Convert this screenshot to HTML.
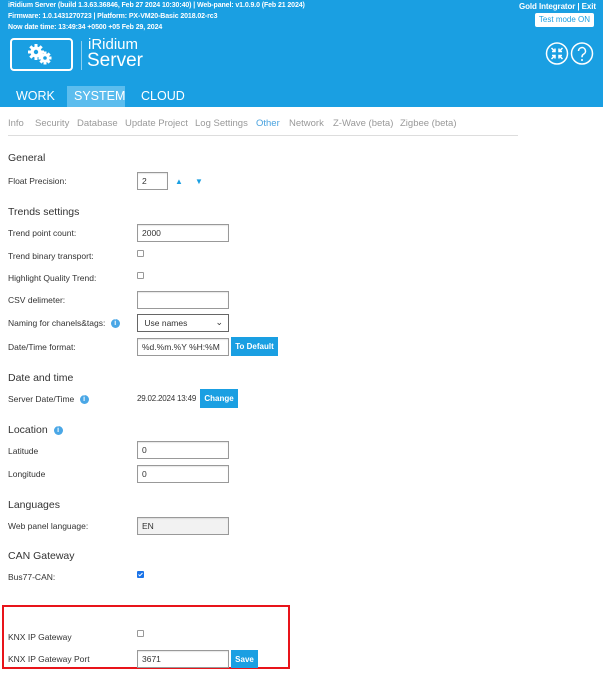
<!DOCTYPE html>
<html><head><meta charset="utf-8"><style>
*{margin:0;padding:0;box-sizing:border-box}
body{width:603px;height:675px;overflow:hidden;background:#fff;font-family:"Liberation Sans",sans-serif;color:#333;position:relative}
.a{position:absolute;white-space:nowrap}
.hdr{position:absolute;left:0;top:0;width:603px;height:107px;background:#1a9fe2}
.t{color:#fff;font-size:7px;font-weight:bold;letter-spacing:-0.1px}
.sub{font-size:9.5px;color:#999;top:118px}
.h{font-size:10.5px;color:#333}
.l{font-size:8.5px;color:#333}
.in{position:absolute;border:1px solid #999;background:#fff;font-size:8.5px;padding:0 0 0 4px;display:flex;align-items:center;box-shadow:inset 0 1px 1px rgba(0,0,0,.1)}
.cb{position:absolute;width:7px;height:7px;border:1px solid #999;border-radius:1px;background:#fff}
.btn{position:absolute;background:#1a9fe2;color:#fff;font-size:8px;font-weight:bold;display:flex;align-items:center;justify-content:center}
.info{display:inline-block;width:9px;height:9px;border-radius:50%;background:#4aa7e6;color:#fff;font-size:7px;text-align:center;line-height:9px;font-weight:bold;vertical-align:middle;margin-left:3px}
</style></head><body>
<div class="hdr"></div>
<div class="a t" style="left:8px;top:2px">iRidium Server (build 1.3.63.36846, Feb 27 2024 10:30:40) | Web-panel: v1.0.9.0 (Feb 21 2024)</div>
<div class="a t" style="left:8px;top:13px">Firmware: 1.0.1431270723 | Platform: PX-VM20-Basic 2018.02-rc3</div>
<div class="a t" style="left:8px;top:24px">Now date time: 13:49:34 +0500 +05 Feb 29, 2024</div>
<div class="a t" style="left:519px;top:2px;font-size:8px">Gold Integrator | Exit</div>
<div class="a" style="left:535px;top:13px;width:59px;height:14px;background:#fff;border-radius:2px;color:#1a9fe2;font-size:8px;text-align:center;line-height:14px">Test mode ON</div>
<div class="a" style="left:10px;top:38px;width:63px;height:33px;border:2px solid #fff;border-radius:4px"></div>
<svg class="a" style="left:26px;top:43px" width="30" height="24" viewBox="0 0 30 24"><g fill="#fff"><circle cx="10" cy="9" r="5.5"/><circle cx="19" cy="15" r="4.5"/></g><g stroke="#fff" stroke-width="3"><path d="M10 1v16M2 9h16M4.3 3.3l11.4 11.4M4.3 14.7L15.7 3.3"/><path d="M19 8.5v13M12.5 15h13M14.4 10.4l9.2 9.2M14.4 19.6l9.2-9.2"/></g><circle cx="10" cy="9" r="2.2" fill="#1a9fe2"/><circle cx="19" cy="15" r="1.8" fill="#1a9fe2"/></svg>
<div class="a" style="left:81px;top:41px;width:1px;height:29px;background:#8ccff0"></div>
<div class="a" style="left:88px;top:36px;color:#fff;font-size:15px">iRidium</div>
<div class="a" style="left:87px;top:50px;color:#fff;font-size:19px">Server</div>
<svg class="a" style="left:545px;top:41px" width="50" height="25" viewBox="0 0 50 25"><g fill="none" stroke="#fff" stroke-width="1.5"><circle cx="12" cy="12.5" r="10.5"/><circle cx="37" cy="12.5" r="10.5"/><path d="M6.5 7l3.5 3.5M10 7.5v3H7M17.5 18L14 14.5M14 17.5v-3h3M14 10.5L17.5 7M14 7.5v3h3M10 14.5L6.5 18M7 14.5h3v3"/><path d="M33.5 10a3.5 3.5 0 1 1 5 3.2c-1.3.6-1.5 1.3-1.5 3"/></g><circle cx="37" cy="19" r="1" fill="#fff"/></svg>
<div class="a" style="left:67px;top:86px;width:58px;height:21px;background:#5cbdee"></div>
<div class="a" style="left:16px;top:89px;color:#fff;font-size:12.5px">WORK</div>
<div class="a" style="left:74px;top:89px;color:#fff;font-size:12.5px">SYSTEM</div>
<div class="a" style="left:141px;top:89px;color:#fff;font-size:12.5px">CLOUD</div>
<div class="a sub" style="left:8px">Info</div>
<div class="a sub" style="left:35px">Security</div>
<div class="a sub" style="left:77px">Database</div>
<div class="a sub" style="left:125px">Update Project</div>
<div class="a sub" style="left:195px">Log Settings</div>
<div class="a sub" style="left:256px;color:#4aa3df">Other</div>
<div class="a sub" style="left:289px">Network</div>
<div class="a sub" style="left:333px">Z-Wave (beta)</div>
<div class="a sub" style="left:400px">Zigbee (beta)</div>
<div class="a" style="left:8px;top:135px;width:510px;height:1px;background:#ddd"></div>

<div class="a h" style="left:8px;top:152px">General</div>
<div class="a l" style="left:8px;top:176px">Float Precision:</div>
<div class="in" style="left:137px;top:172px;width:31px;height:18px">2</div>
<div class="a" style="left:175px;top:177px;color:#1a9fe2;font-size:8px">▲</div>
<div class="a" style="left:195px;top:177px;color:#1a9fe2;font-size:8px">▼</div>

<div class="a h" style="left:8px;top:206px">Trends settings</div>
<div class="a l" style="left:8px;top:228px">Trend point count:</div>
<div class="in" style="left:137px;top:224px;width:92px;height:18px">2000</div>
<div class="a l" style="left:8px;top:251px">Trend binary transport:</div>
<div class="cb" style="left:137px;top:250px"></div>
<div class="a l" style="left:8px;top:273px">Highlight Quality Trend:</div>
<div class="cb" style="left:137px;top:272px"></div>
<div class="a l" style="left:8px;top:295px">CSV delimeter:</div>
<div class="in" style="left:137px;top:291px;width:92px;height:18px"></div>
<div class="a l" style="left:8px;top:318px">Naming for chanels&amp;tags: <span class="info">i</span></div>
<div class="in" style="left:137px;top:314px;width:92px;height:18px;box-shadow:none;border-color:#666">&nbsp;Use names<span style="position:absolute;right:5px;top:2px;font-size:9px">⌄</span></div>
<div class="a l" style="left:8px;top:342px">Date/Time format:</div>
<div class="in" style="left:137px;top:338px;width:92px;height:18px">%d.%m.%Y %H:%M</div>
<div class="btn" style="left:231px;top:337px;width:47px;height:19px">To Default</div>

<div class="a h" style="left:8px;top:372px">Date and time</div>
<div class="a l" style="left:8px;top:394px">Server Date/Time <span class="info">i</span></div>
<div class="a l" style="left:137px;top:394px;font-size:8px;letter-spacing:-0.2px">29.02.2024 13:49</div>
<div class="btn" style="left:200px;top:389px;width:38px;height:19px">Change</div>

<div class="a h" style="left:8px;top:424px">Location <span class="info">i</span></div>
<div class="a l" style="left:8px;top:446px">Latitude</div>
<div class="in" style="left:137px;top:441px;width:92px;height:18px">0</div>
<div class="a l" style="left:8px;top:469px">Longitude</div>
<div class="in" style="left:137px;top:465px;width:92px;height:18px">0</div>

<div class="a h" style="left:8px;top:499px">Languages</div>
<div class="a l" style="left:8px;top:521px">Web panel language:</div>
<div class="in" style="left:137px;top:517px;width:92px;height:18px;background:#f2f2f2">EN</div>

<div class="a h" style="left:8px;top:550px">CAN Gateway</div>
<div class="a l" style="left:8px;top:572px">Bus77-CAN:</div>
<div class="cb" style="left:137px;top:571px;background:#1a73e8;border-color:#1a73e8"><svg width="5" height="5" style="position:absolute;left:0;top:0" viewBox="0 0 5 5"><path d="M.5 2.5l1.3 1.3L4.5 1" stroke="#fff" fill="none" stroke-width="1"/></svg></div>

<div class="a" style="left:2px;top:605px;width:288px;height:64px;border:2px solid #e8141a"></div>
<div class="a l" style="left:8px;top:632px">KNX IP Gateway</div>
<div class="cb" style="left:137px;top:630px"></div>
<div class="a l" style="left:8px;top:654px">KNX IP Gateway Port</div>
<div class="in" style="left:137px;top:650px;width:92px;height:18px">3671</div>
<div class="btn" style="left:231px;top:650px;width:27px;height:18px">Save</div>
</body></html>
